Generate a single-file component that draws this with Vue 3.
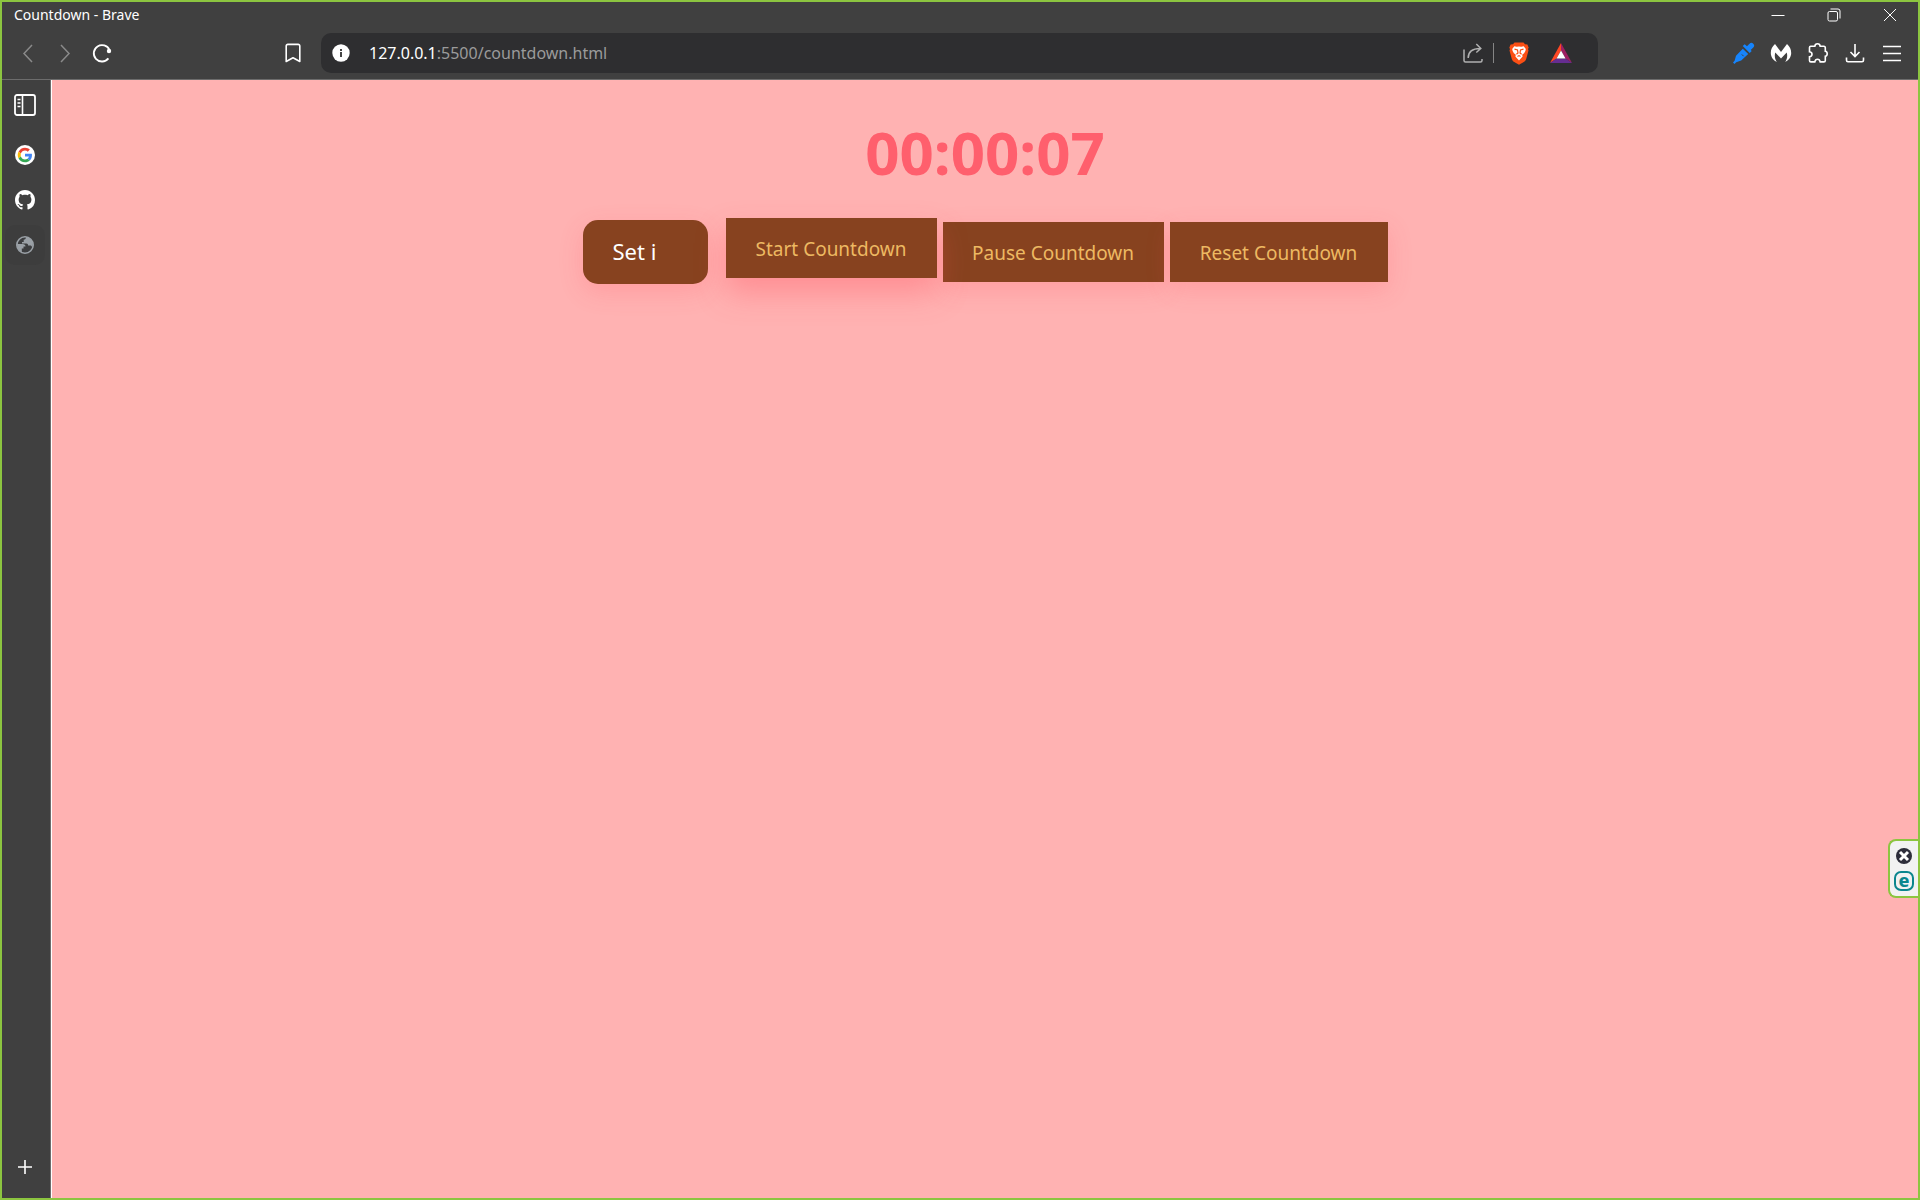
<script setup>
import { ref, computed } from 'vue'

const seconds = ref(7)
const minutesInput = ref('')

const display = computed(() => {
  const pad = (n) => String(n).padStart(2, '0')
  const s = seconds.value
  return `${pad(Math.floor(s / 3600))}:${pad(Math.floor(s / 60) % 60)}:${pad(s % 60)}`
})
</script>

<template>
  <div class="window">
    <header class="chrome">
      <div class="titlebar">
        <span class="title">Countdown - Brave</span>
        <div class="controls">
          <button aria-label="Minimize">
            <svg width="14" height="14" viewBox="0 0 14 14"><path d="M0.5 7.5h13" /></svg>
          </button>
          <button aria-label="Restore">
            <svg width="14" height="14" viewBox="0 0 14 14"><rect x="1" y="3.5" width="9.5" height="9.5" rx="1.5" /><path d="M3.5 1h7.5a2 2 0 0 1 2 2v7.5" /></svg>
          </button>
          <button aria-label="Close">
            <svg width="14" height="14" viewBox="0 0 14 14"><path d="M1 1l12 12M13 1L1 13" /></svg>
          </button>
        </div>
      </div>

      <div class="toolbar">
        <nav class="nav">
          <button class="dim" aria-label="Back">
            <svg width="20" height="20" viewBox="0 0 20 20" stroke-width="1.500"><path d="M14 2L6 10.500l8 8.500" /></svg>
          </button>
          <button class="dim" aria-label="Forward">
            <svg width="20" height="20" viewBox="0 0 20 20" stroke-width="1.500"><path d="M6 2l8 8.500L6 19" /></svg>
          </button>
          <button aria-label="Reload">
            <svg width="20" height="20" viewBox="0 0 20 20" stroke-width="1.800"><path d="M16.400 15.400A8.200 8.200 0 1 1 17.500 7" /><circle cx="17" cy="8" r="2.200" fill="currentColor" stroke="none" /></svg>
          </button>
          <button class="bookmark" aria-label="Bookmark this tab">
            <svg width="20" height="20" viewBox="0 0 20 20"><path d="M3.200 18.500V3a1.600 1.600 0 0 1 1.600-1.600h10.400A1.600 1.600 0 0 1 16.800 3v15.500L10 14.800z" stroke-width="1.600" stroke-linejoin="round" /></svg>
          </button>
        </nav>

        <div class="address">
          <svg class="info" width="18" height="18" viewBox="0 0 18 18"><circle cx="9" cy="9" r="8.700" fill="#fff" stroke="none" /><path d="M8 5h2v2H8zM8 8h2v5H8z" fill="#444" stroke="none" /></svg>
          <a class="url" href="#"><b>127.0.0.1</b>:5500/countdown.html</a>
          <svg class="share" width="20" height="20" viewBox="0 0 20 20" stroke-width="1.500"><path d="M1 6.500V17.500a1.500 1.500 0 0 0 1.500 1.500H17.500a1.500 1.500 0 0 0 1.500-1.500V16M5.200 15c0-6 3-9.500 12-9.500M13.300 1l4.500 4.500-4.500 4" /></svg>
          <span class="divider"></span>
          <svg class="shield" width="20" height="23" viewBox="0 0 20 23">
            <path d="M5.500 0.500h9l1.500 1.800 2.400.2 1.300 3.200-.7 1.300.5 1.500-2.300 8.500c-.4 1.300-1 2-2 2.700L10 22.700l-5.200-3c-1-.7-1.600-1.400-2-2.700L.5 8.500 1 7 .3 5.700l1.300-3.200 2.400-.2z" fill="#fb4f14" stroke="none" />
            <path d="M10 4.500l2.200.3 2.500-.6 2.100 2.800-.4 2-1.300 2.200-1.900 1.600.4 1.700L10 18.500l-3.600-4 .4-1.700-1.900-1.600L3.600 9l-.4-2 2.100-2.800 2.500.6z" fill="#fff" stroke="none" />
            <path d="M5.500 7.200l3 .7.500 3-1.600 1.300M14.500 7.200l-3 .7-.5 3 1.600 1.300M8.500 14.600l1.500-1 1.500 1" stroke="#fb4f14" stroke-width="1.200" />
          </svg>
          <svg class="bat" width="22" height="20" viewBox="0 0 22 20"><g stroke="none"><path d="M11 0v7.500L6.500 15.500 0 20z" fill="#ff4724" /><path d="M11 0l11 20-6.500-4.500L11 7.500z" fill="#9e1f63" /><path d="M0 20l6.500-4.500h9L22 20z" fill="#662d91" /><path d="M11 7.500l4.500 8h-9z" fill="#fff" /></g></svg>
        </div>

        <div class="actions">
          <button aria-label="Color picker">
            <svg width="22" height="22" viewBox="0 0 22 22"><g fill="#1684fc" stroke="none"><path d="M14 4.200l2.500-2.500a2.600 2.600 0 0 1 3.800 3.700l-2.600 2.700 1 1-2 1.900-7-7 2-1.800z" /><path d="M9.800 6.700l5.400 5.400-7 6.500-5 1.700L1.500 22 0 20.500l1.600-1.800L3 13.800z" /></g><path d="M8.800 12.400l1.800 1.800" stroke="#404040" stroke-width="1" /></svg>
          </button>
          <button aria-label="Malwarebytes">
            <svg width="22" height="20" viewBox="0 0 22 20"><path d="M5 1l6 8 6-8c2.700 2.500 4.200 5 4.200 9 0 4-2.600 7.400-6 9 1.800-2.600 2.600-6 1.500-9.500L11 15.500 5.300 9.500C4.200 13 5 16.400 6.800 19c-3.400-1.600-6-5-6-9C.8 6 2.300 3.500 5 1z" fill="#fff" stroke="none" /></svg>
          </button>
          <button aria-label="Extensions">
            <svg width="20" height="20" viewBox="0 0 20 20"><path d="M1.500 4.500a1.200 1.200 0 0 1 1.200-1.200h4.100C7 1.500 8 .8 9.500.8s2.500.7 2.700 2.500h3.600A1.500 1.500 0 0 1 17.300 5v3.300c1.200.2 1.900 1.200 1.900 2.500s-.7 2.300-1.900 2.500v4.200a1.400 1.400 0 0 1-1.400 1.400h-3.700c-.3-1.800-1.200-2.700-2.700-2.700s-2.400.9-2.700 2.700H2.900a1.400 1.400 0 0 1-1.400-1.400v-3.700C3.300 13.500 4 12.500 4 11.200S3.300 9 1.500 8.700z" stroke-width="1.600" /></svg>
          </button>
          <button aria-label="Downloads">
            <svg width="20" height="20" viewBox="0 0 20 20"><path d="M10 1v12M5.500 9l4.500 4.500L14.500 9M1.500 14.500v2.700a1.500 1.500 0 0 0 1.500 1.500h14a1.500 1.500 0 0 0 1.500-1.500v-2.700" stroke-width="1.600" /></svg>
          </button>
          <button aria-label="Menu">
            <svg width="20" height="20" viewBox="0 0 20 20"><path d="M1 3.500h18M1 10.500h18M1 17.500h18" stroke-width="1.600" /></svg>
          </button>
        </div>
      </div>
    </header>

    <div class="body">
      <aside class="sidebar">
        <button aria-label="Toggle sidebar">
          <svg width="22" height="22" viewBox="0 0 22 22"><rect x="1" y="1" width="20" height="20" rx="2" stroke-width="1.800" /><path d="M8.500 1v20M3.500 5.500h3M3.500 9h3M3.500 12.500h3" stroke-width="1.600" /></svg>
        </button>
        <button class="google" aria-label="Google">
          <svg width="20" height="20" viewBox="-9 -9 66 66"><g stroke="none"><circle cx="24" cy="24" r="33" fill="#fff" /><path fill="#EA4335" d="M24 9.500c3.540 0 6.710 1.220 9.210 3.600l6.850-6.850C35.900 2.380 30.470 0 24 0 14.620 0 6.510 5.380 2.560 13.220l7.980 6.190C12.430 13.720 17.740 9.500 24 9.500z" /><path fill="#4285F4" d="M46.980 24.550c0-1.570-.15-3.090-.38-4.550H24v9.020h12.940c-.58 2.960-2.260 5.480-4.780 7.180l7.730 6c4.510-4.180 7.090-10.360 7.090-17.650z" /><path fill="#FBBC05" d="M10.530 28.590c-.48-1.450-.76-2.990-.76-4.590s.27-3.140.76-4.590l-7.980-6.190C.92 16.460 0 20.120 0 24c0 3.880.92 7.540 2.560 10.780l7.970-6.190z" /><path fill="#34A853" d="M24 48c6.480 0 11.930-2.130 15.890-5.810l-7.730-6c-2.150 1.450-4.920 2.300-8.160 2.300-6.260 0-11.570-4.220-13.470-9.910l-7.980 6.190C6.510 42.620 14.620 48 24 48z" /></g></svg>
        </button>
        <button aria-label="GitHub">
          <svg width="20" height="20" viewBox="0 0 16 16"><path fill="#fff" stroke="none" d="M8 0C3.580 0 0 3.580 0 8c0 3.540 2.290 6.530 5.470 7.590.4.070.55-.17.55-.38 0-.19-.01-.82-.01-1.490-2.010.37-2.530-.49-2.690-.94-.09-.23-.48-.94-.82-1.130-.28-.15-.68-.52-.01-.53.63-.01 1.080.58 1.230.82.72 1.210 1.870.87 2.330.66.07-.52.28-.87.51-1.070-1.780-.2-3.640-.89-3.640-3.950 0-.87.31-1.590.82-2.150-.08-.2-.36-1.020.08-2.120 0 0 .67-.21 2.200.82.64-.18 1.320-.27 2-.27s1.360.09 2 .27c1.530-1.040 2.200-.82 2.200-.82.44 1.100.16 1.920.08 2.120.51.56.82 1.270.82 2.150 0 3.070-1.870 3.750-3.650 3.950.29.25.54.73.54 1.480 0 1.070-.01 1.930-.01 2.200 0 .21.15.46.55.38A8.010 8.010 0 0 0 16 8c0-4.420-3.580-8-8-8z" /></svg>
        </button>
        <button class="current" aria-label="Countdown">
          <svg width="18" height="18" viewBox="0 0 18 18"><circle cx="9" cy="9" r="8.200" fill="#3c3d3f" stroke="#9aa0a6" stroke-width="1.600" /><g fill="#9aa0a6" stroke="none"><path d="M1 8h5.500c2 0 3 1 3 2.500h-2v2H5.800v3.700C3 15 1 12 1 8z" /><path d="M10 1c0 1.700-.8 2.600-2.300 2.700v2.200H6v1.600h4.500c1 0 1.600.7 1.600 2h2.200c1 0 2 .8 1.600 2.500C18.500 7 15.500 1.500 10 1z" /></g></svg>
        </button>
        <button class="add" aria-label="New tab">
          <svg width="14" height="14" viewBox="0 0 14 14"><path d="M7 0v14M0 7h14" stroke-width="1.600" /></svg>
        </button>
      </aside>

      <main class="page">
        <h1>{{ display }}</h1>
        <div class="row">
          <input v-model="minutesInput" type="text" placeholder="Set i" aria-label="Set in minutes" />
          <button class="start">Start Countdown</button>
          <button class="pause">Pause Countdown</button>
          <button class="reset">Reset Countdown</button>
        </div>
      </main>
    </div>

    <div class="widget">
      <button aria-label="Dismiss">
        <svg width="16" height="16" viewBox="0 0 16 16"><circle cx="8" cy="8" r="8" fill="#2d2d3a" stroke="none" /><path d="M4 4l8 8M12 4l-8 8" stroke="#fff" stroke-width="3" /></svg>
      </button>
      <button class="eset" aria-label="Protected browser">e</button>
    </div>
  </div>
</template>

<style>
body {
  background: #404040;
}
</style>

<style scoped>
.window {
  position: relative;
  box-sizing: border-box;
  min-height: 100vh;
  display: flex;
  flex-direction: column;
  border: 2px solid #8cc540;
  background: #404040;
  color: #fff;
  font-family: "Noto Sans", "Open Sans", sans-serif;
}

button {
  display: flex;
  align-items: center;
  justify-content: center;
  padding: 0;
  border: 0;
  background: none;
  color: inherit;
  font-family: inherit;
}

svg {
  display: block;
  flex: none;
  fill: none;
  stroke: currentColor;
}

.chrome {
  height: 77px;
  border-bottom: 1px solid #6c6c6c;
}

.titlebar {
  display: flex;
  justify-content: space-between;
  height: 25px;
}

.title {
  padding-left: 12px;
  font-size: 14px;
  line-height: 25px;
}

.controls {
  display: flex;
}

.controls button {
  width: 56px;
}

.toolbar {
  display: flex;
  align-items: center;
  height: 52px;
}

.nav {
  display: flex;
  width: 312px;
  padding-left: 7px;
}

.nav button,
.actions button {
  width: 37px;
  height: 40px;
}

.nav .dim {
  color: #8a8a8a;
}

.nav .bookmark {
  margin-left: auto;
  margin-right: 10px;
}

.address {
  display: flex;
  flex: 1;
  align-items: center;
  box-sizing: border-box;
  height: 40px;
  padding: 0 26px 0 11px;
  border-radius: 10px;
  background: #2e2e30;
}

.url {
  flex: 1;
  padding-left: 19px;
  color: #9b9b9b;
  font-size: 16px;
  text-decoration: none;
}

.url b {
  color: #fff;
  font-weight: 400;
}

.share {
  color: #b0b0b0;
}

.divider {
  width: 1px;
  height: 20px;
  margin: 0 15px 0 10px;
  background: #858585;
}

.bat {
  margin-left: 21px;
}

.actions {
  display: flex;
  justify-content: flex-end;
  width: 312px;
  padding-right: 8px;
}

.body {
  display: flex;
  flex: 1;
}

.sidebar {
  display: flex;
  flex-direction: column;
  align-items: center;
  gap: 5px;
  width: 46px;
  padding: 5px 2px 0 0;
  border-right: 1px solid #6c6c6c;
}

.sidebar button {
  width: 40px;
  height: 40px;
}

.sidebar .google {
  margin-top: 5px;
}

.sidebar .current {
  border-radius: 10px;
  background: #3d3d3d;
}

.sidebar .add {
  margin-top: auto;
  margin-bottom: 11px;
}

.page {
  flex: 1;
  padding-top: 32px;
  border-left: 1px solid #fff;
  background: #ffb2b2;
}

h1 {
  margin: 0 0 28px;
  color: #ff5f6d;
  font-size: 60px;
  font-weight: 700;
  line-height: 80px;
  text-align: center;
}

.row {
  display: flex;
  align-items: center;
  justify-content: center;
  gap: 6px;
}

.row input,
.row button {
  box-sizing: border-box;
  height: 60px;
  background: #87421f;
  box-shadow: 0 8px 25px rgba(255, 75, 90, 0.2);
}

.row input {
  width: 125px;
  height: 64px;
  margin-right: 12px;
  padding: 0 32px 2px 30px;
  border: 0;
  border-radius: 15px;
  color: #fff;
  font-family: inherit;
  font-size: 22px;
}

.row input::placeholder {
  color: #fff;
  opacity: 1;
}

.row button {
  padding-top: 2px;
  color: #edb962;
  font-size: 19px;
}

.row .start {
  position: relative;
  width: 211px;
  transform: translateY(-4px);
  box-shadow: 0 15px 30px rgba(255, 75, 90, 0.35);
}

.row .pause {
  width: 221px;
}

.row .reset {
  width: 218px;
}

.widget {
  position: absolute;
  right: 0;
  bottom: 300px;
  display: flex;
  flex-direction: column;
  align-items: center;
  gap: 7px;
  box-sizing: border-box;
  width: 30px;
  height: 59px;
  padding-top: 7px;
  border: 2px solid #8cc540;
  border-right: 0;
  border-radius: 8px 0 0 8px;
  background: #f2f2f2;
}

.eset {
  box-sizing: border-box;
  width: 20px;
  height: 20px;
  padding-bottom: 2px;
  border: 2px solid #0b868e;
  border-radius: 7px;
  color: #0b868e;
  font-size: 18px;
  font-weight: 800;
  line-height: 14px;
}
</style>
